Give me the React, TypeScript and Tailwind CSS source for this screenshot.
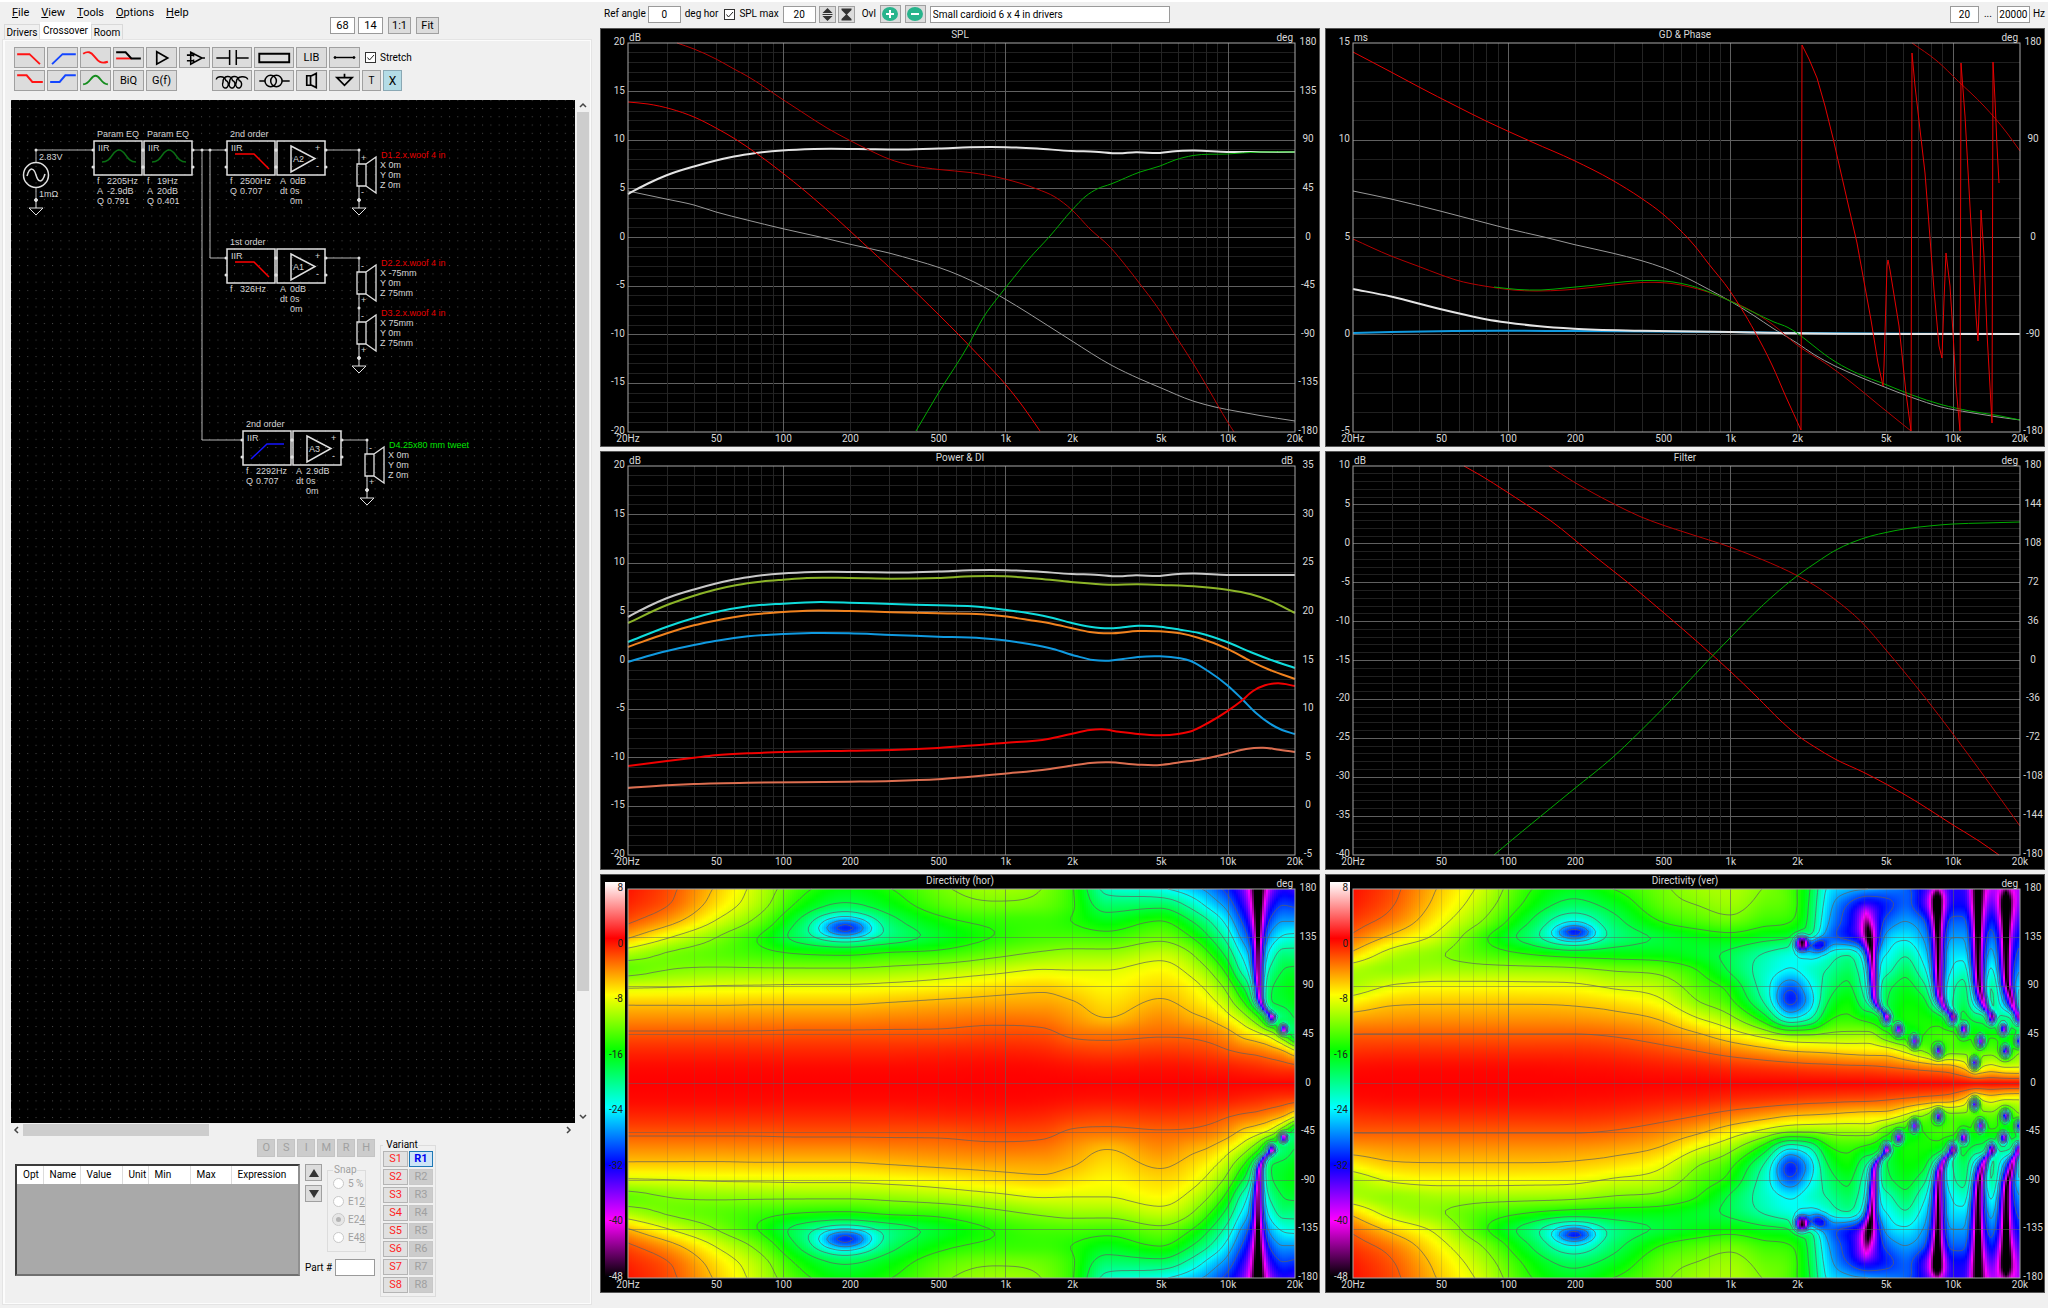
// App.tsx
import { Fragment, useState } from 'react';
import type { ReactNode } from 'react';

type Point = [number, number];

/* ------------------------------------------------------------------ */
/* Chart geometry                                                      */
/* ------------------------------------------------------------------ */

const PLOT_W = 667;
const PLOT_H = 389;
const PLOT_X = 28;
const PLOT_Y = 15;

const FREQ_LABELS: [number, string][] = [
  [20, '20Hz'], [50, '50'], [100, '100'], [200, '200'], [500, '500'],
  [1000, '1k'], [2000, '2k'], [5000, '5k'], [10000, '10k'], [20000, '20k'],
];

const freqToX = (f: number) => (Math.log10(f / 20) / 3) * PLOT_W;

const GRID_FREQS: number[] = [];
for (const decade of [10, 100, 1000, 10000]) {
  for (let n = 1; n < 10; n++) {
    const f = n * decade;
    if (f > 20 && f < 20000) GRID_FREQS.push(f);
  }
}

const range = (from: number, to: number, step: number) => {
  const out: number[] = [];
  const n = Math.round((to - from) / step);
  for (let i = 0; i <= n; i++) out.push(from + i * step);
  return out;
};

// Slope of the curve at point k, weighted by the distance to both neighbours
function tangentAt(xs: number[], ys: number[], k: number, keepExtremes: boolean) {
  const slope = (j: number) => (ys[j + 1] - ys[j]) / (xs[j + 1] - xs[j]);
  if (k === 0) return slope(0);
  if (k === xs.length - 1) return slope(k - 1);
  const a = slope(k - 1);
  const b = slope(k);
  if (keepExtremes && a * b <= 0) return 0;
  const ha = xs[k] - xs[k - 1];
  const hb = xs[k + 1] - xs[k];
  const m = (a * hb + b * ha) / (ha + hb);
  if (!keepExtremes) return m;
  const limit = 3 * Math.min(Math.abs(a), Math.abs(b));
  return Math.sign(m) * Math.min(Math.abs(m), limit);
}

// Smooth line through all points, x has to grow
function smooth(points: Point[]) {
  const xs = points.map((p) => p[0]);
  const ys = points.map((p) => p[1]);
  let d = `M${xs[0]} ${ys[0]}`;
  for (let i = 0; i < points.length - 1; i++) {
    const h = (xs[i + 1] - xs[i]) / 3;
    const y1 = ys[i] + h * tangentAt(xs, ys, i, false);
    const y2 = ys[i + 1] - h * tangentAt(xs, ys, i + 1, false);
    d += `C${(xs[i] + h).toFixed(1)} ${y1.toFixed(1)} ${(xs[i + 1] - h).toFixed(1)} ${y2.toFixed(1)} ${xs[i + 1]} ${ys[i + 1]}`;
  }
  return d;
}

const straight = (points: Point[]) => 'M' + points.map((p) => p.join(' ')).join('L');

/* ------------------------------------------------------------------ */
/* Curves (plot units)                                                 */
/* ------------------------------------------------------------------ */

interface Curve {
  color: string;
  width: number;
  points: Point[];
  sharp?: boolean;
}

const TOTAL: Point[] = [[0, 151], [20, 140.5], [38, 132.5], [66, 123.5], [88, 117.5], [106, 113.5], [128, 110], [154, 107.5], [186, 106], [230, 106], [275, 106.5], [311, 105.5], [342, 104.3], [378, 104.2], [409, 105.5], [444, 108], [467, 108.7], [491, 110.3], [508, 109.2], [532, 110], [547, 108.3], [565, 107.6], [599, 109], [632, 109], [667, 109]];

const SPL_CURVES: Curve[] = [
  { color: '#989898', width: 1, points: [[0, 148], [38, 156], [66, 162], [88, 169], [119, 177], [154, 185.5], [192, 194], [221, 201], [261, 210], [288, 217.5], [311, 224.5], [333, 233], [355, 243.5], [377, 256], [400, 270], [422, 284], [444, 298], [483, 322], [512, 336], [532, 344.5], [565, 358], [587, 364], [610, 368.5], [632, 372.5], [667, 378]] },
  { color: '#e4e4e4', width: 2, points: TOTAL },
  { color: '#b40000', width: 1, points: [[49, 0], [66, 6], [88, 16], [106, 26], [119, 33], [154, 56], [177, 71], [199, 85], [221, 97], [241, 107], [261, 116], [284, 122.5], [311, 126.5], [342, 129.5], [377, 136], [409, 146], [427, 154], [444, 167], [462, 186], [482, 204], [498, 223], [512, 241], [532, 268], [547, 292], [565, 320], [581, 347], [599, 378], [606, 389]] },
  { color: '#e60000', width: 1, points: [[0, 59], [20, 61], [43, 66], [66, 74], [88, 85], [108, 96.5], [128, 110], [154, 129.5], [177, 148], [199, 167], [221, 187], [248, 212], [275, 237], [311, 272], [331, 292], [355, 317], [378, 342], [396, 365], [412, 388]] },
  { color: '#00aa00', width: 1, points: [[288, 388], [311, 349], [341, 301], [355, 275], [371, 253], [387, 233], [400, 217], [422, 193], [444, 167], [458, 153], [469, 146], [483, 141], [512, 129], [532, 123], [547, 117], [565, 112.5], [599, 111], [632, 109], [667, 109]] },
];

const GD_CURVES: Curve[] = [
  { color: '#989898', width: 1, points: [[0, 148], [38, 156], [87, 168], [133, 180], [154, 185.5], [191, 194], [221, 201.5], [259, 210], [288, 217.5], [311, 225], [334, 235], [355, 246], [377, 258], [400, 272], [421, 286], [444, 300], [461, 311.5], [482, 323], [508, 334.5], [529, 343], [559, 354.5], [588, 364], [617, 369.5], [645, 374], [667, 377]] },
  { color: '#109ae0', width: 2, points: [[0, 290], [38, 289], [100, 288], [221, 288], [377, 289], [444, 290], [667, 291]] },
  { color: '#e4e4e4', width: 2, points: [[0, 246], [38, 253.5], [87, 266], [113, 272], [134, 276.5], [154, 279.5], [184, 283], [221, 285.7], [287, 287.7], [377, 289], [444, 290.3], [558, 291], [667, 291]] },
  { color: '#b40000', width: 1, points: [[0, 196], [38, 213], [66, 223.5], [87, 231.5], [103, 237], [133, 243.3], [160, 247], [183, 248], [212, 247], [240, 244.3], [264, 241.7], [296, 239.3], [320, 240.7], [334, 243.3], [355, 249], [377, 257.7], [393, 265], [419, 281], [444, 302], [475, 322], [499, 340], [527, 363], [558, 388]] },
  { color: '#b40000', width: 1, points: [[559, 0], [584, 18], [605, 38], [631, 63], [654, 90], [667, 108]] },
  { color: '#00aa00', width: 1, points: [[141, 244], [165, 246.5], [188, 247], [212, 245], [240, 242.3], [264, 239.5], [296, 237.5], [320, 239], [334, 241.7], [355, 248.5], [377, 258], [400, 269], [421, 279], [435, 284.5], [444, 290], [457, 300], [471, 311], [482, 318.5], [508, 332], [529, 340], [559, 352], [588, 361.5], [617, 368], [645, 372.5], [667, 377]] },
  { color: '#e60000', width: 1, points: [[0, 9], [38, 29], [66, 44], [103, 63], [133, 78], [179, 99], [221, 117.5], [259, 137], [288, 155], [311, 172], [327, 187], [341, 202], [355, 220], [377, 248], [388, 265], [402, 289], [419, 322], [433, 354], [448, 387]] },
  { color: '#e60000', width: 1, sharp: true, points: [[448, 387], [449, 2], [456, 16], [464, 35], [472, 63], [480, 95], [485, 117], [504, 200], [518, 277], [525, 320], [530, 343], [531, 323], [534, 223], [535, 217], [537, 227], [546, 283], [553, 350], [558, 388], [559, 10], [562, 43], [572, 130], [581, 247], [586, 303], [589, 315], [591, 257], [593, 210], [597, 243], [600, 290], [603, 343], [607, 388], [608, 20], [612, 73], [619, 200], [623, 273], [625, 298], [627, 237], [628, 167], [631, 213], [634, 290], [639, 380], [640, 19], [642, 57], [644, 103], [646, 140]] },
];

const POWER_CURVES: Curve[] = [
  { color: '#c8c8c8', width: 2, points: TOTAL },
  { color: '#8cb428', width: 2, points: [[0, 157], [39, 139], [66, 129.7], [87, 123.7], [109, 119], [132, 115.7], [155, 113.7], [179, 112], [221, 112], [264, 112.7], [310, 112], [344, 110.3], [377, 110.3], [411, 112.7], [443, 116], [481, 118.7], [510, 118.3], [533, 119], [571, 120.7], [599, 123.7], [623, 128.3], [642, 134.7], [667, 147]] },
  { color: '#10dcdc', width: 2, points: [[0, 176], [39, 160.7], [66, 152], [87, 146.3], [120, 140.3], [155, 137.7], [193, 136], [221, 136.7], [264, 138], [310, 139.3], [344, 140.3], [376, 143.7], [401, 147.3], [425, 152], [443, 156.7], [462, 160.7], [481, 162.3], [495, 161.3], [510, 159.7], [532, 160.7], [552, 163.7], [571, 167], [599, 176], [623, 186.3], [644, 194.3], [667, 202]] },
  { color: '#f0821e', width: 2, points: [[0, 181], [39, 167.3], [66, 159.3], [87, 154.7], [120, 149], [155, 146], [179, 144.7], [221, 145], [264, 146.3], [310, 147.3], [354, 148.3], [376, 150.3], [401, 154], [425, 158], [443, 162], [462, 166], [481, 167.3], [510, 165], [532, 165.3], [552, 167.3], [571, 172], [599, 182.7], [623, 195.3], [642, 204], [667, 213]] },
  { color: '#109ae0', width: 2, points: [[0, 196], [19, 190.3], [39, 185], [66, 179], [87, 175], [120, 170.3], [155, 168], [184, 167], [221, 167.3], [264, 169], [310, 170.7], [354, 172.3], [376, 174.3], [401, 178], [425, 183], [448, 190], [465, 194], [481, 194.7], [495, 193], [510, 191], [532, 190.3], [552, 192.3], [562, 194.7], [580, 205], [599, 219], [613, 232], [628, 247], [642, 257.7], [654, 264], [667, 268]] },
  { color: '#f00000', width: 2, points: [[0, 300], [39, 295], [66, 291.7], [87, 289.3], [120, 287.3], [155, 286], [221, 284.7], [264, 284], [310, 282], [354, 278.7], [376, 277], [420, 273], [443, 268], [462, 264], [474, 263.3], [491, 265.7], [510, 268], [532, 269.3], [550, 268], [564, 265], [580, 257], [599, 245.3], [613, 235.3], [625, 225], [637, 219.3], [650, 217.3], [667, 220]] },
  { color: '#dc6e50', width: 2, points: [[0, 322], [39, 319.3], [66, 318], [120, 316.7], [221, 315.7], [264, 315], [310, 313.3], [340, 311], [376, 307.7], [420, 303.3], [443, 299.7], [462, 297], [481, 296.3], [510, 298.7], [532, 299], [552, 296.3], [571, 293.7], [599, 287.7], [618, 283], [635, 281.7], [651, 283.7], [667, 286]] },
];

const FILTER_CURVES: Curve[] = [
  { color: '#b40000', width: 1, points: [[196, 0], [221, 16], [261, 38], [287, 50.5], [311, 59.5], [334, 67], [377, 81], [409, 93.5], [444, 109.5], [461, 119], [482, 133.5], [508, 155.5], [533, 184], [551, 205.5], [574, 234], [600, 268], [631, 310], [667, 360]] },
  { color: '#e60000', width: 1, points: [[111, 0], [127, 9], [154, 26], [174, 39], [198, 55], [240, 89], [273, 115], [311, 147], [348, 179], [377, 205], [405, 232], [428, 255], [444, 269], [461, 280.5], [482, 293], [511, 306.5], [533, 318], [565, 336.5], [600, 359], [626, 375], [646, 389]] },
  { color: '#00aa00', width: 1, points: [[141, 389], [154, 378], [188, 350], [221, 323], [259, 292], [287, 265.5], [320, 232], [355, 194.5], [377, 172], [400, 148.5], [421, 129], [444, 110], [464, 96], [482, 84.5], [499, 76.5], [518, 70], [533, 66.5], [551, 63], [579, 59.7], [600, 58], [631, 57], [667, 56]] },
];

/* ------------------------------------------------------------------ */
/* Directivity data: level in dB for 0..180 deg in 15 deg steps        */
/* ------------------------------------------------------------------ */

interface Directivity {
  columns: { x: number; db: number[] }[];
  // dips that follow a line: [x, deg, half width, depth]
  lines: [number, number, number, number][][];
  // dips at a spot: [x, deg, half width, half height in deg, depth]
  spots: [number, number, number, number, number][];
}

const HORIZONTAL: Directivity = {
  columns: [
    { x: 0, db: [0, -0.3, -1.2, -2.6, -4.4, -6.4, -9.4, -12.9, -10.6, -5.8, -2.6, -1.2, -0.6] },
    { x: 39, db: [0, -0.3, -1.2, -2.6, -4.4, -6.4, -9.2, -12, -12.2, -8.8, -5, -2.9, -2.3] },
    { x: 88, db: [0, -0.3, -1.2, -2.6, -4.4, -6.4, -8.9, -11.6, -13.2, -12, -9.2, -7.2, -6.3] },
    { x: 132, db: [0, -0.3, -1.2, -2.6, -4.3, -6.3, -8.8, -11.6, -14.2, -15.2, -13, -11, -10.2] },
    { x: 170, db: [0, -0.3, -1.2, -2.5, -4.3, -6.3, -8.7, -11.6, -15, -18.8, -18, -15.5, -14] },
    { x: 217, db: [0, -0.3, -1.2, -2.5, -4.3, -6.3, -8.7, -11.6, -15.4, -21, -23.5, -18.5, -16.3] },
    { x: 261, db: [0, -0.3, -1.2, -2.5, -4.1, -6, -8.4, -11.3, -14.6, -19.5, -19, -16.5, -15.1] },
    { x: 311, db: [0, -0.3, -1.1, -2.5, -3.9, -5.6, -7.9, -10.6, -14.2, -17, -15.8, -13.6, -12.5] },
    { x: 366, db: [0, -0.2, -1, -2.2, -3.6, -5.3, -7.1, -9.7, -12.7, -14.9, -14.5, -12.4, -11] },
    { x: 415, db: [0, -0.3, -1.2, -2.4, -3.8, -5.2, -6.6, -8.9, -11.6, -13.8, -14.3, -12.9, -12.1] },
    { x: 443, db: [0, -0.5, -1.7, -3.3, -4.7, -5.8, -7.2, -9, -11.2, -13.7, -15, -14.6, -14.6] },
    { x: 479, db: [0, -0.6, -2, -3.6, -5.9, -7, -7.9, -9, -11.2, -14, -16.5, -19.2, -22] },
    { x: 532, db: [0, -0.5, -1.7, -3.2, -4.4, -5.7, -6.9, -8, -9.9, -12.6, -14.9, -18.8, -23.5] },
    { x: 564, db: [0, -0.6, -1.9, -3.4, -5.4, -6.9, -8.1, -9.9, -12, -15, -18, -22, -26] },
    { x: 582, db: [0, -0.8, -2.2, -3.9, -6.2, -8.2, -10, -12.2, -15, -18, -21, -25, -28] },
    { x: 599, db: [0, -0.9, -2.8, -4.9, -7.9, -10.6, -13, -16, -19, -22, -25, -28, -31] },
    { x: 616, db: [0, -1.2, -3.4, -6.8, -10.6, -15, -18.5, -22.5, -25, -28, -30.5, -33, -35] },
    { x: 629, db: [0, -1.4, -3.8, -8, -14, -19, -22, -25, -27, -30, -33, -35, -37] },
    { x: 642, db: [0, -1.7, -4.6, -10, -19, -18, -18.5, -20.5, -23, -26, -29, -32, -35] },
    { x: 655, db: [0, -2, -5.8, -14, -19, -17.5, -17, -18, -20, -23.5, -27, -30, -33] },
    { x: 667, db: [0, -2.2, -8.5, -20, -18, -16.5, -16.3, -17.5, -20, -23, -27, -30.5, -34] },
  ],
  lines: [
    [[643, 62, 4, 10], [638, 66, 4, 17], [632, 75, 4, 20], [630, 90, 4, 21], [629, 120, 4, 21], [629, 180, 7, 18]],
  ],
  spots: [[217, 143, 26, 9, 8], [643, 60, 4, 4, 16], [655, 50, 4, 4, 26]],
};

const VERTICAL: Directivity = {
  columns: [
    { x: 0, db: [0, -0.4, -1.5, -2.9, -5, -7.6, -10.5, -10.5, -6.6, -3.6, -1.9, -0.9, -0.5] },
    { x: 38, db: [0, -0.3, -1.4, -2.9, -4.7, -6.4, -8.8, -11.3, -10, -6.6, -4, -2.8, -2.3] },
    { x: 87, db: [0, -0.3, -1.4, -2.9, -4.6, -6.2, -8.2, -10.8, -11.8, -9.9, -8.2, -7, -6.3] },
    { x: 133, db: [0, -0.3, -1.4, -2.9, -4.6, -6.2, -8.2, -11, -13.7, -14.8, -12.5, -11, -10] },
    { x: 173, db: [0, -0.3, -1.4, -2.9, -4.6, -6.2, -8.3, -11.1, -15, -19, -17.5, -15.5, -14.5] },
    { x: 221, db: [0, -0.4, -1.4, -2.9, -4.7, -6.4, -8.5, -11.4, -16.3, -24, -23, -19, -16.8] },
    { x: 260, db: [0, -0.5, -1.6, -3.2, -5.1, -7, -9.4, -12.2, -16.3, -20, -19, -17, -15] },
    { x: 311, db: [0, -0.8, -2.3, -4.3, -6.4, -8.7, -10.6, -13, -16.5, -17.5, -14.8, -13, -12.3] },
    { x: 344, db: [0, -1, -3, -5.6, -8.8, -11.7, -13.4, -15, -17.2, -16.5, -13.6, -12, -11] },
    { x: 377, db: [0, -1.4, -4, -7.6, -11.2, -14.3, -16, -18.3, -18.5, -16, -12.8, -11.2, -10.6] },
    { x: 409, db: [0, -1.7, -5, -9.8, -16, -20.5, -22, -22, -21, -17, -14.2, -12.8, -12] },
    { x: 438, db: [0, -2, -6, -12, -23, -28, -27, -24, -23, -18, -15, -14, -14] },
    { x: 457, db: [0, -2.2, -6.3, -12, -21, -25, -24, -22.5, -24, -20, -19, -18.5, -18] },
    { x: 473, db: [0, -2.3, -6.5, -11.5, -16, -18.5, -20, -21, -23, -27, -26, -25, -24] },
    { x: 494, db: [0, -2.5, -6.9, -11.2, -14.5, -15.8, -17.5, -19, -21.5, -31, -31, -30, -26] },
    { x: 515, db: [0, -2.6, -7.2, -11, -16, -20, -22, -23, -25, -32, -33, -33, -27] },
    { x: 533, db: [0, -2.9, -7.5, -14, -17, -18, -19, -22, -24, -26, -29, -31, -28] },
    { x: 552, db: [0, -3.4, -9.5, -16, -15.5, -16, -17, -19, -21.5, -24.5, -27, -29, -29] },
    { x: 570, db: [0, -4, -12, -15, -15.5, -17, -20, -23, -25, -27, -29, -33, -33] },
    { x: 585, db: [0, -4.5, -14, -14, -16.5, -22, -25, -27, -29, -31, -33, -36, -36] },
    { x: 598, db: [0, -5, -13, -14, -19, -21, -22, -24, -25, -27, -29, -32, -33] },
    { x: 610, db: [0, -6.5, -13, -15.5, -17, -19, -20, -22.5, -25, -27, -29, -32, -33] },
    { x: 624, db: [0, -9, -13, -15.5, -19, -25, -27, -29, -31, -33, -35, -37, -38] },
    { x: 638, db: [0, -8, -13, -15.5, -19, -20, -21, -23.5, -26, -28.5, -31, -34, -37] },
    { x: 652, db: [0, -9, -15, -15.5, -20, -26, -28, -30, -32, -34, -36, -38, -38] },
    { x: 667, db: [0, -9, -12, -17, -21, -21, -24, -27, -29, -31, -33, -35, -37] },
  ],
  lines: [
    [[533, 62, 4, 8], [527, 68, 4, 17], [522, 75, 4, 19], [520, 90, 4, 20], [519, 105, 4, 21], [517, 125, 5, 22], [514, 142, 7, 16], [512, 158, 8, 6], [511, 170, 6, 0], [511, 180, 6, 0]],
    [[599, 62, 4, 10], [593, 67, 4, 17], [588, 75, 4, 20], [585, 90, 4, 21], [584, 130, 4, 21], [583, 170, 6, 19], [583, 180, 6, 6]],
    [[638, 62, 4, 10], [633, 68, 4, 17], [628, 80, 4, 20], [625, 95, 4, 21], [624, 130, 4, 21], [624, 180, 6, 16]],
    [[665, 62, 4, 10], [661, 68, 4, 17], [657, 80, 4, 20], [653, 95, 4, 21], [652, 130, 4, 21], [652, 170, 6, 17], [652, 180, 6, 6]],
  ],
  spots: [
    [221, 140, 18, 7, 7],
    [436, 80, 14, 16, 3],
    [448, 130, 6, 6, 28], [464, 128, 10, 7, 9],
    [533, 60, 4, 5, 20], [545, 50, 4, 5, 24], [561, 39, 4, 5, 24], [585, 30, 4, 5, 24], [621, 19, 4, 5, 26],
    [599, 60, 4, 5, 18], [610, 50, 4, 5, 24], [627, 39, 4, 5, 24], [652, 30, 4, 5, 22],
    [638, 60, 4, 5, 18], [650, 50, 4, 5, 22], [666, 39, 4, 5, 22],
    [665, 60, 4, 5, 16],
  ],
};

const HALF_H = PLOT_H / 2;
const COL_STEP = 2;
const ROW_COUNT = 56;

function interpolate(xs: number[], ys: number[], x: number, keepExtremes = true) {
  let i = 0;
  while (i < xs.length - 2 && x > xs[i + 1]) i++;
  const h = xs[i + 1] - xs[i];
  const t = Math.min(1, Math.max(0, (x - xs[i]) / h));
  const t2 = t * t;
  const t3 = t2 * t;
  return (
    (2 * t3 - 3 * t2 + 1) * ys[i] +
    (t3 - 2 * t2 + t) * h * tangentAt(xs, ys, i, keepExtremes) +
    (3 * t2 - 2 * t3) * ys[i + 1] +
    (t3 - t2) * h * tangentAt(xs, ys, i + 1, keepExtremes)
  );
}

// Grid of levels, [column][row], row 0 is 180 deg and the last row is 0 deg
function buildField(data: Directivity) {
  const angles = range(0, 180, 15);
  const xs = data.columns.map((c) => c.x);
  const cols = Math.floor(PLOT_W / COL_STEP) + 1;
  const field: number[][] = Array.from({ length: cols }, () => []);
  for (let r = 0; r < ROW_COUNT; r++) {
    const deg = 180 * (1 - r / (ROW_COUNT - 1));
    const ys = data.columns.map((c) => interpolate(angles, c.db, deg, false));
    for (let c = 0; c < cols; c++) {
      const x = c * COL_STEP;
      let v = interpolate(xs, ys, x);
      for (const line of data.lines) {
        const degs = line.map((p) => p[1]);
        if (deg < degs[0]) continue;
        const at = (k: number) => interpolate(degs, line.map((p) => p[k]), deg);
        const dx = Math.abs(x - at(0));
        if (dx > 40) continue;
        v -= at(3) * Math.exp(-((dx / at(2)) ** 1.4));
      }
      for (const [sx, sd, w, h, depth] of data.spots) {
        v -= depth * Math.exp(-(((x - sx) / w) ** 2) - ((deg - sd) / h) ** 2);
      }
      field[c][r] = v;
    }
  }
  return field;
}

const COLOR_STOPS: [number, number[]][] = [
  [-48, [0, 0, 0]],
  [-40, [255, 0, 255]],
  [-32, [0, 0, 255]],
  [-24, [0, 255, 255]],
  [-16, [0, 255, 0]],
  [-8, [255, 255, 0]],
  [0, [255, 0, 0]],
  [8, [255, 255, 255]],
];

function levelColor(db: number) {
  const v = Math.min(8, Math.max(-48, db));
  let i = 0;
  while (i < COLOR_STOPS.length - 2 && v > COLOR_STOPS[i + 1][0]) i++;
  const [a, ca] = COLOR_STOPS[i];
  const [b, cb] = COLOR_STOPS[i + 1];
  const t = (v - a) / (b - a);
  return `rgb(${ca.map((c, k) => Math.round(c + (cb[k] - c) * t)).join(',')})`;
}

// Marching squares over the upper half, repeated upside down for the lower half
function contourPath(field: number[][], level: number) {
  let d = '';
  const rowH = HALF_H / (ROW_COUNT - 1);
  for (let c = 0; c < field.length - 1; c++) {
    for (let r = 0; r < ROW_COUNT - 1; r++) {
      const corners: [number, number, number][] = [
        [c, r, field[c][r]],
        [c + 1, r, field[c + 1][r]],
        [c + 1, r + 1, field[c + 1][r + 1]],
        [c, r + 1, field[c][r + 1]],
      ];
      const hits: Point[] = [];
      for (let k = 0; k < 4; k++) {
        const a = corners[k];
        const b = corners[(k + 1) % 4];
        if (a[2] < level !== b[2] < level) {
          const t = (level - a[2]) / (b[2] - a[2]);
          hits.push([(a[0] + (b[0] - a[0]) * t) * COL_STEP, (a[1] + (b[1] - a[1]) * t) * rowH]);
        }
      }
      for (let k = 0; k + 1 < hits.length; k += 2) {
        const [p, q] = [hits[k], hits[k + 1]];
        d += `M${p[0].toFixed(1)} ${p[1].toFixed(1)}L${q[0].toFixed(1)} ${q[1].toFixed(1)}`;
        d += `M${p[0].toFixed(1)} ${(PLOT_H - p[1]).toFixed(1)}L${q[0].toFixed(1)} ${(PLOT_H - q[1]).toFixed(1)}`;
      }
    }
  }
  return d;
}

const FIELDS = { hor: buildField(HORIZONTAL), ver: buildField(VERTICAL) };
const CONTOUR_LEVELS = range(-30, -3, 3);
const CONTOURS = {
  hor: CONTOUR_LEVELS.map((l) => contourPath(FIELDS.hor, l)).join(''),
  ver: CONTOUR_LEVELS.map((l) => contourPath(FIELDS.ver, l)).join(''),
};

/* ------------------------------------------------------------------ */
/* Charts                                                              */
/* ------------------------------------------------------------------ */

const LABEL = 'fill-[#d8d8d8] text-[10px]';

interface FrameProps {
  title: string;
  leftUnit?: string;
  rightUnit: string;
  leftLabels: number[];
  rightLabels: number[];
  children: ReactNode;
}

function ChartFrame({ title, leftUnit, rightUnit, leftLabels, rightLabels, children }: FrameProps) {
  const labelY = (i: number, n: number) => PLOT_Y + (PLOT_H * i) / (n - 1) + 2;
  return (
    <svg viewBox="0 0 720 419" role="img" aria-label={title} className="block h-auto w-full bg-black">
      <rect x="0.5" y="0.5" width="719" height="418" fill="none" stroke="#555" />
      <g transform={`translate(${PLOT_X} ${PLOT_Y})`}>{children}</g>
      <rect x={PLOT_X} y={PLOT_Y} width={PLOT_W} height={PLOT_H} fill="none" stroke="#a8a8a8" />
      <text x="360" y="10" textAnchor="middle" className={LABEL}>{title}</text>
      {leftUnit && <text x="29" y="13" className={LABEL}>{leftUnit}</text>}
      <text x="693" y="13" textAnchor="end" className={LABEL}>{rightUnit}</text>
      {leftLabels.map((v, i) => (
        <text key={v} x="25" y={labelY(i, leftLabels.length)} textAnchor="end" className={LABEL}>{v}</text>
      ))}
      {rightLabels.map((v, i) => (
        <text key={v} x="708" y={labelY(i, rightLabels.length)} textAnchor="middle" className={LABEL}>{v}</text>
      ))}
      {FREQ_LABELS.map(([f, label]) => (
        <text key={f} x={PLOT_X + freqToX(f)} y="414" textAnchor="middle" className={LABEL}>{label}</text>
      ))}
    </svg>
  );
}

interface LineChartProps extends Omit<FrameProps, 'children'> {
  divisions: number;
  curves: Curve[];
}

function LineChart({ divisions, curves, ...frame }: LineChartProps) {
  return (
    <ChartFrame {...frame}>
      <g shapeRendering="crispEdges">
        {range(1, divisions - 1, 1).map((i) => (
          <line key={i} x1="0" x2={PLOT_W} y1={(PLOT_H * i) / divisions} y2={(PLOT_H * i) / divisions} stroke={i % 5 ? '#202020' : '#606060'} />
        ))}
        {GRID_FREQS.map((f) => (
          <line key={f} x1={freqToX(f)} x2={freqToX(f)} y1="0" y2={PLOT_H} stroke={[100, 1000, 10000].includes(f) ? '#606060' : '#242424'} />
        ))}
      </g>
      {curves.map((c, i) => (
        <path key={i} d={c.sharp ? straight(c.points) : smooth(c.points)} fill="none" stroke={c.color} strokeWidth={c.width} strokeLinejoin="round" />
      ))}
    </ChartFrame>
  );
}

function DirectivityChart({ title, plane }: { title: string; plane: 'hor' | 'ver' }) {
  const field = FIELDS[plane];
  return (
    <ChartFrame title={title} rightUnit="deg" leftLabels={[]} rightLabels={[180, 135, 90, 45, 0, -45, -90, -135, -180]}>
      <defs>
        {field.map((column, c) => (
          <linearGradient key={c} id={`${plane}-${c}`} gradientUnits="userSpaceOnUse" x1="0" y1="0" x2="0" y2={HALF_H} spreadMethod="reflect">
            {column.map((v, r) => (
              <stop key={r} offset={r / (ROW_COUNT - 1)} stopColor={levelColor(v)} />
            ))}
          </linearGradient>
        ))}
        <linearGradient id={`${plane}-scale`} x1="0" y1="1" x2="0" y2="0">
          {COLOR_STOPS.map(([v]) => (
            <stop key={v} offset={(v + 48) / 56} stopColor={levelColor(v)} />
          ))}
        </linearGradient>
      </defs>
      {field.map((_, c) => (
        <rect key={c} x={c * COL_STEP} y="0" width={Math.min(COL_STEP, PLOT_W - c * COL_STEP)} height={PLOT_H} fill={`url(#${plane}-${c})`} shapeRendering="crispEdges" />
      ))}
      <g shapeRendering="crispEdges" stroke="#606060">
        {range(1, 7, 1).map((i) => (
          <line key={i} x1="0" x2={PLOT_W} y1={(PLOT_H * i) / 8} y2={(PLOT_H * i) / 8} strokeOpacity="0.5" />
        ))}
        {GRID_FREQS.map((f) => (
          <line key={f} x1={freqToX(f)} x2={freqToX(f)} y1="0" y2={PLOT_H} strokeOpacity={[100, 1000, 10000].includes(f) ? 0.6 : 0.2} />
        ))}
      </g>
      <path d={CONTOURS[plane]} fill="none" stroke="#606060" strokeOpacity="0.7" />
      <rect x="-23" y="-7" width="20" height={PLOT_H + 6} fill={`url(#${plane}-scale)`} />
      {range(8, -48, -8).map((v, i) => (
        <text key={v} x="-5" y={(PLOT_H * i) / 7 + 2} textAnchor="end" className={v === -48 ? LABEL : 'fill-[#202020] text-[10px]'}>{v}</text>
      ))}
    </ChartFrame>
  );
}

/* ------------------------------------------------------------------ */
/* Schematic                                                           */
/* ------------------------------------------------------------------ */

const WHITE = '#e0e0e0';

function SchematicText({ x, y, color = '#d4d4d4', children }: { x: number; y: number; color?: string; children: ReactNode }) {
  return (
    <text x={x} y={y} fill={color} className="font-['Liberation_Sans',Arial,sans-serif] text-[9px]">{children}</text>
  );
}

function Dot({ x, y }: Record<'x' | 'y', number>) {
  return <circle cx={x} cy={y} r="1.5" fill={WHITE} />;
}

function Ground({ x, y }: Record<'x' | 'y', number>) {
  return (
    <g stroke={WHITE} fill="none">
      <Dot x={x} y={y} />
      <path d={`M${x} ${y}v8M${x - 7} ${y + 8}h14l-7 7z`} />
    </g>
  );
}

interface BlockProps {
  x: number;
  y: number;
  title?: string;
  params: [string, string][];
  children: ReactNode;
}

function Block({ x, y, title, params, children }: BlockProps) {
  return (
    <g transform={`translate(${x} ${y})`}>
      {title && <SchematicText x={3} y={-4}>{title}</SchematicText>}
      <rect width="48" height="34" fill="none" stroke={WHITE} strokeWidth="1.5" />
      <Dot x={-1} y={9} />
      <Dot x={-1} y={26} />
      <Dot x={49} y={9} />
      <Dot x={49} y={26} />
      {children}
      {params.map(([name, value], i) => (
        <Fragment key={i}>
          <SchematicText x={3} y={43 + i * 10}>{name}</SchematicText>
          <SchematicText x={13} y={43 + i * 10}>{value}</SchematicText>
        </Fragment>
      ))}
    </g>
  );
}

const FILTER_SHAPES = {
  peak: { d: 'M8 21C18 21 18 9 25 9S32 21 42 21', color: '#0a6e14' },
  lowpass: { d: 'M8 13H27L42 28', color: '#ff0000' },
  highpass: { d: 'M8 28L24 13H41', color: '#1414ff' },
};

function FilterBlock({ shape, ...props }: Omit<BlockProps, 'children'> & { shape: keyof typeof FILTER_SHAPES }) {
  return (
    <Block {...props}>
      <SchematicText x={4} y={10}>IIR</SchematicText>
      <path d={FILTER_SHAPES[shape].d} fill="none" stroke={FILTER_SHAPES[shape].color} strokeWidth="1.5" />
    </Block>
  );
}

function AmpBlock({ name, gain, x, y }: { name: string; gain: string; x: number; y: number }) {
  return (
    <Block x={x} y={y} params={[['A', gain], ['dt', '0s'], ['', '0m']]}>
      <path d="M14 5L38 17.500L14 31Z" fill="none" stroke={WHITE} strokeWidth="1.5" />
      <SchematicText x={16} y={21}>{name}</SchematicText>
      <SchematicText x={38} y={10}>+</SchematicText>
      <SchematicText x={39} y={28}>-</SchematicText>
    </Block>
  );
}

interface SpeakerProps {
  x: number;
  y: number;
  name: string;
  color: string;
  position: string[];
  inverted?: boolean;
}

function Speaker({ x, y, name, color, position, inverted }: SpeakerProps) {
  return (
    <g transform={`translate(${x} ${y})`}>
      <Dot x={0} y={0} />
      <path d="M0 0V14M0 36V50" stroke={WHITE} />
      <path d="M-2 14H7V36H-2ZM7 14L17 7V43L7 36" fill="none" stroke={WHITE} strokeWidth="1.300" />
      <SchematicText x={2} y={11}>{inverted ? '-' : '+'}</SchematicText>
      <SchematicText x={2} y={45}>{inverted ? '+' : '-'}</SchematicText>
      <SchematicText x={22} y={8} color={color}>{name}</SchematicText>
      {position.map((line, i) => (
        <SchematicText key={line} x={21} y={18 + i * 10}>{line}</SchematicText>
      ))}
    </g>
  );
}

function Schematic() {
  return (
    <svg role="img" aria-label="Crossover schematic" className="block h-full w-full bg-black">
      <defs>
        <pattern id="dots" x="8" y="8" width="8.270" height="8.270" patternUnits="userSpaceOnUse">
          <rect width="1" height="1" fill="#4a4a4a" />
        </pattern>
      </defs>
      <rect width="100%" height="100%" fill="url(#dots)" />
      <g fill="none" stroke="#b4b4b4">
        <path d="M25 50V62M25 88V100M25 50H82M181 50H214M191 50V340H231M199 50V158H214M315 50H348M315 158H348M331 340H356" />
      </g>
      <circle cx="25" cy="75" r="12.500" fill="none" stroke={WHITE} strokeWidth="1.500" />
      <path d="M16 76C19 66 23 68 25 75S31 84 34 74" fill="none" stroke={WHITE} strokeWidth="1.500" />
      <Dot x={25} y={50} />
      <Ground x={25} y={100} />
      <SchematicText x={28} y={60}>2.83V</SchematicText>
      <SchematicText x={28} y={97}>1mΩ</SchematicText>
      <FilterBlock x={83} y={41} title="Param EQ" shape="peak" params={[['f', '2205Hz'], ['A', '-2.9dB'], ['Q', '0.791']]} />
      <FilterBlock x={133} y={41} title="Param EQ" shape="peak" params={[['f', '19Hz'], ['A', '20dB'], ['Q', '0.401']]} />
      <Dot x={191} y={50} />
      <Dot x={199} y={50} />
      <FilterBlock x={216} y={41} title="2nd order" shape="lowpass" params={[['f', '2500Hz'], ['Q', '0.707']]} />
      <AmpBlock x={266} y={41} name="A2" gain="0dB" />
      <Speaker x={348} y={50} name="D1.2.x.woof 4 in" color="#e60000" position={['X 0m', 'Y 0m', 'Z 0m']} />
      <Ground x={348} y={100} />
      <FilterBlock x={216} y={149} title="1st order" shape="lowpass" params={[['f', '326Hz']]} />
      <AmpBlock x={266} y={149} name="A1" gain="0dB" />
      <Speaker x={348} y={158} name="D2.2.x.woof 4 in" color="#e60000" position={['X -75mm', 'Y 0m', 'Z 75mm']} inverted />
      <Speaker x={348} y={208} name="D3.2.x.woof 4 in" color="#e60000" position={['X 75mm', 'Y 0m', 'Z 75mm']} inverted />
      <Ground x={348} y={258} />
      <FilterBlock x={232} y={331} title="2nd order" shape="highpass" params={[['f', '2292Hz'], ['Q', '0.707']]} />
      <AmpBlock x={282} y={331} name="A3" gain="2.9dB" />
      <Speaker x={356} y={340} name="D4.25x80 mm tweet" color="#00e600" position={['X 0m', 'Y 0m', 'Z 0m']} inverted />
      <Ground x={356} y={390} />
    </svg>
  );
}

/* ------------------------------------------------------------------ */
/* Left side                                                           */
/* ------------------------------------------------------------------ */

const BUTTON = 'flex items-center justify-center border border-[#a0a0a0] bg-[#dcdcdc]';

interface Tool {
  name: string;
  wide?: boolean;
  icon: ReactNode;
}

const TOOLS_TOP: Tool[] = [
  { name: 'Low pass', icon: <path d="M2 6.500H15L26 17" stroke="#ff1414" /> },
  { name: 'High pass', icon: <path d="M4 17L15 6.500H29" stroke="#1446ff" /> },
  { name: 'All pass', icon: <path d="M2 6C7 3 10 4 14 9S20 17 28 14.500" stroke="#ff1414" /> },
  { name: 'Shelf pair', icon: <><path d="M2 11H18" stroke="#ff1414" /><path d="M2 4.500H12L18 11H28" /></> },
  { name: 'Amplifier', icon: <path d="M10 4L21.500 10.500L10 17Z" strokeWidth="1.800" /> },
  { name: 'Op amp', icon: <path d="M11 4.500L23 10.500L11 17ZM7 7.500H14M7 13.500H14M23 10.500H26M14 5V9M14 12V15.500" strokeWidth="1.600" /> },
  { name: 'Capacitor', wide: true, icon: <path d="M3 10.500H17M24 10.500H37M17 2V18M24 2V18" strokeWidth="1.600" /> },
  { name: 'Resistor', wide: true, icon: <path d="M4 6H35.500V15H4Z" /> },
  { name: 'Library', icon: 'LIB' },
  { name: 'Wire', icon: <><path d="M5 10H25" strokeWidth="1.500" /><circle cx="5" cy="10" r="1" fill="black" strokeWidth="1" /><circle cx="25" cy="10" r="1" fill="black" strokeWidth="1" /></> },
];

const TOOLS_BOTTOM: (Tool | null)[] = [
  { name: 'Low shelf', icon: <path d="M2 4.500H12L18 11.500H29" stroke="#ff1414" /> },
  { name: 'High shelf', icon: <path d="M2 11.500H12L18 4.500H29" stroke="#1446ff" /> },
  { name: 'Peak', icon: <path d="M2 14C9 14 10 5 15 5S21 14 28 14" stroke="#148c1e" /> },
  { name: 'Biquad', icon: 'BiQ' },
  { name: 'Transfer function', icon: 'G(f)' },
  null,
  { name: 'Inductor', wide: true, icon: <path d="M3 9C3 5 12 5 13 10A3 4 0 1 1 10 12C10 4 19 4 20 10A3 4 0 1 1 17 12C17 4 26 4 27 10A3 4 0 1 1 24 12C24 4 36 5 36 9" strokeWidth="1.500" /> },
  { name: 'Transformer', wide: true, icon: <g strokeWidth="1.600"><circle cx="16" cy="10.500" r="6" /><circle cx="22" cy="10.500" r="6" /><path d="M4 10.500H10M28 10.500H36" /></g> },
  { name: 'Driver', icon: <path d="M10 5H14V15H10ZM14 5.500L20 2.500V17.500L14 14.500" strokeWidth="1.800" /> },
  { name: 'Ground', icon: <path d="M15 3V7M7 7H23L15 15Z" strokeWidth="1.800" /> },
];

function ToolButton({ tool }: { tool: Tool | null }) {
  if (!tool) return <span className="w-[31px]" />;
  return (
    <button type="button" title={tool.name} aria-label={tool.name} className={`${BUTTON} h-[21px] text-[11px] ${tool.wide ? 'w-10' : 'w-[31px]'}`}>
      {typeof tool.icon === 'string' ? tool.icon : (
        <svg viewBox={tool.wide ? '0 0 39 20' : '0 0 30 20'} className="h-full w-full" fill="none" stroke="black" strokeWidth="2">
          {tool.icon}
        </svg>
      )}
    </button>
  );
}

function CheckBox({ label }: { label: string }) {
  const [checked, setChecked] = useState(true);
  return (
    <label className="relative flex items-center gap-1 whitespace-nowrap">
      <input type="checkbox" checked={checked} onChange={() => setChecked(!checked)} className="h-[11px] w-[11px] appearance-none border border-[#333] bg-white" />
      {checked && (
        <svg viewBox="0 0 11 11" className="pointer-events-none absolute left-0 h-[11px] w-[11px]" fill="none" stroke="#222">
          <path d="M2.500 5.500L4.500 8L9 3" />
        </svg>
      )}
      {label}
    </label>
  );
}

const FIELD = 'border border-[#9a9a9a] bg-white text-center outline-none';

function MenuBar() {
  return (
    <nav className="flex h-5 items-center gap-3 pl-3 text-[11px]">
      {['File', 'View', 'Tools', 'Options', 'Help'].map((item) => (
        <button key={item} type="button">
          <u>{item[0]}</u>{item.slice(1)}
        </button>
      ))}
    </nav>
  );
}

function TabBar() {
  return (
    <div className="flex h-[18px] items-end pl-1">
      <div role="tablist" className="flex items-end">
        <button type="button" role="tab" className="h-4 w-9 border border-b-0 border-[#d9d9d9]">Drivers</button>
        <button type="button" role="tab" aria-selected="true" className="h-[18px] w-[51px] bg-white">Crossover</button>
        <button type="button" role="tab" className="h-4 w-[32px] border border-b-0 border-[#d9d9d9]">Room</button>
      </div>
      <div className="relative -top-1.5 ml-auto mr-[152px] flex items-center gap-[3px] text-[11px]">
        <input aria-label="Grid width" defaultValue="68" className={`${FIELD} h-[17px] w-[25px] bg-[#f4f4f4]`} />
        <input aria-label="Grid height" defaultValue="14" className={`${FIELD} h-[17px] w-[25px] bg-[#f4f4f4]`} />
        <button type="button" className={`${BUTTON} ml-[2px] h-[17px] w-[23px]`}>1:1</button>
        <button type="button" className={`${BUTTON} ml-[2px] h-[17px] w-[23px]`}>Fit</button>
      </div>
    </div>
  );
}

function Toolbar() {
  return (
    <div className="flex flex-col gap-[2px] pb-[9px] pl-[9px] pt-[6px]">
      <div className="flex items-center gap-[2px]">
        {TOOLS_TOP.map((tool) => <ToolButton key={tool.name} tool={tool} />)}
        <div className="ml-[3px]"><CheckBox label="Stretch" /></div>
      </div>
      <div className="flex items-center gap-[2px]">
        {TOOLS_BOTTOM.map((tool, i) => <ToolButton key={i} tool={tool} />)}
        <button type="button" className={`${BUTTON} h-[21px] w-[19px]`}>T</button>
        <button type="button" className="flex h-[21px] w-[19px] items-center justify-center border border-[#8aa8b4] bg-[#b4dce6] text-[12px]">X</button>
      </div>
    </div>
  );
}

function Chevron({ d }: { d: string }) {
  return (
    <svg viewBox="0 0 12 12" className="h-3 w-3" fill="none" stroke="#444" strokeWidth="1.500">
      <path d={d} />
    </svg>
  );
}

function ParameterTable() {
  return (
    <div className="h-28 w-[285px] border-2 border-[#3c3c3c] border-b-[#707070] border-r-[#909090] bg-[#a9a9a9]">
      <table className="w-full table-fixed border-collapse bg-white text-left">
        <thead>
          <tr className="h-[18px]">
            {([['Opt', 'w-[26px]'], ['Name', 'w-[37px]'], ['Value', 'w-[42px]'], ['Unit', 'w-[26px]'], ['Min', 'w-[42px]'], ['Max', 'w-[41px]'], ['Expression', '']] as const).map(([name, width]) => (
              <th key={name} className={`${width} border-r border-[#dcdcdc] pl-1.5 font-normal last:border-r-0`}>{name}</th>
            ))}
          </tr>
        </thead>
      </table>
    </div>
  );
}

function SnapBox() {
  return (
    <fieldset disabled className="flex h-[88px] w-[38px] flex-col gap-[5px] border border-[#dcdcdc] pl-[5px] pt-px text-[#a0a0a0]">
      <legend className="pl-px leading-3">Snap</legend>
      {([['5 ', '%'], ['E1', '2'], ['E2', '4'], ['E4', '8']] as const).map(([head, tail]) => (
        <label key={tail} className="flex h-[13px] items-center gap-1 whitespace-nowrap">
          <input type="radio" name="snap" defaultChecked={tail === '4'} className="h-[11px] w-[11px] shrink-0 appearance-none rounded-full border border-[#c8c8c8] bg-white checked:border-[3px] checked:border-[#e6e6e6] checked:bg-[#b4b4b4] checked:outline checked:outline-[#c8c8c8]" />
          <span>{head}{tail === '%' ? tail : <u>{tail}</u>}</span>
        </label>
      ))}
    </fieldset>
  );
}

function VariantBox() {
  return (
    <fieldset className="w-[56px] border border-[#dcdcdc] px-[2px] pb-[3px]">
      <legend className="pl-[3px] leading-3">Variant</legend>
      <div className="grid grid-cols-2 gap-x-px gap-y-[2px]">
        {range(1, 8, 1).map((n) => (
          <Fragment key={n}>
            <button type="button" className="h-4 border border-[#b4b4b4] bg-[#e1e1e1] text-[11px] leading-3 text-[#ff1e1e]">S{n}</button>
            {n === 1 ? (
              <button type="button" className="h-4 border border-[#1e78b4] bg-[#cce4f7] text-[11px] font-bold leading-3 text-[#0000f0]">R1</button>
            ) : (
              <button type="button" disabled className="h-4 border border-[#c8c8c8] bg-[#cccccc] text-[11px] leading-3 text-[#a0a0a0]">R{n}</button>
            )}
          </Fragment>
        ))}
      </div>
    </fieldset>
  );
}

function BottomPanel() {
  return (
    <div className="flex gap-[5px] pb-[6px] pl-[10px] pt-[2px]">
      <div>
        <div className="flex justify-end gap-[2px] pb-[7px]">
          {['O', 'S', 'I', 'M', 'R', 'H'].map((name) => (
            <button key={name} type="button" disabled className="h-[18px] w-[18px] border border-[#c4c4c4] bg-[#cccccc] text-[11px] leading-3 text-[#a0a0a0]">{name}</button>
          ))}
        </div>
        <div className="flex gap-[5px]">
          <ParameterTable />
          <div className="flex flex-col justify-between">
            <div className="flex gap-[5px]">
              <div className="flex flex-col gap-1">
                <button type="button" aria-label="Move up" className={`${BUTTON} h-[17px] w-[17px]`}>
                  <svg viewBox="0 0 12 12" className="h-3 w-3"><path d="M6 2L11 10H1Z" fill="#333" /></svg>
                </button>
                <button type="button" aria-label="Move down" className={`${BUTTON} h-[17px] w-[17px]`}>
                  <svg viewBox="0 0 12 12" className="h-3 w-3"><path d="M6 10L11 2H1Z" fill="#333" /></svg>
                </button>
              </div>
              <SnapBox />
            </div>
            <label className="flex items-center gap-[3px] whitespace-nowrap">
              Part #
              <input className={`${FIELD} h-[17px] w-10`} />
            </label>
          </div>
        </div>
      </div>
      <VariantBox />
    </div>
  );
}

function CrossoverPane() {
  return (
    <aside className="flex w-[594px] shrink-0 flex-col pb-1 pr-[3px]">
      <MenuBar />
      <TabBar />
      <div className="ml-[3px] flex min-h-0 flex-1 flex-col border border-l-2 border-[#fcfcfc] outline outline-[#e4e4e4]">
        <Toolbar />
        <div className="flex min-h-0 flex-1 pl-[6px]">
          <div className="min-w-0 flex-1"><Schematic /></div>
          <div className="flex w-[15px] flex-col items-center">
            <Chevron d="M3 7L6 4L9 7" />
            <div className="w-3 grow-[88] bg-[#cdcdcd]" />
            <div className="grow-[12]" />
            <Chevron d="M3 4L6 7L9 4" />
          </div>
        </div>
        <div className="flex h-[14px] items-center pl-[6px] pr-[15px]">
          <Chevron d="M7 3L4 6L7 9" />
          <div className="h-3 w-[33%] bg-[#cdcdcd]" />
          <div className="flex-1" />
          <Chevron d="M4 3L7 6L4 9" />
        </div>
        <BottomPanel />
      </div>
    </aside>
  );
}

/* ------------------------------------------------------------------ */
/* Right side                                                          */
/* ------------------------------------------------------------------ */

function ChartToolbar() {
  return (
    <div className="flex h-[26px] items-center pb-[2px] pl-1">
      <label className="flex items-center gap-[2px]">
        Ref angle
        <input defaultValue="0" className={`${FIELD} h-[17px] w-[33px]`} />
      </label>
      <span className="ml-1 mr-[6px]">deg hor</span>
      <CheckBox label="SPL max" />
      <input aria-label="SPL max value" defaultValue="20" className={`${FIELD} ml-1 h-[17px] w-[33px]`} />
      <button type="button" aria-label="Step SPL max" className={`${BUTTON} ml-[3px] h-[17px] w-[17px]`}>
        <svg viewBox="0 0 13 15" className="h-[15px] w-[13px]" fill="#333"><path d="M6.500 1L11.500 6H1.500ZM6.500 14L11.500 9H1.500ZM1.500 7h10v1h-10z" /></svg>
      </button>
      <button type="button" aria-label="Fit SPL range" className={`${BUTTON} ml-[2px] h-[17px] w-[17px]`}>
        <svg viewBox="0 0 13 15" className="h-[15px] w-[13px]" fill="#333"><path d="M1.500 1.500h10v1.500L7 7.500l4.500 4.500v1.500h-10V12L6 7.500L1.500 3z" /></svg>
      </button>
      <span className="ml-[7px] mr-1">Ovl</span>
      <button type="button" aria-label="Add overlay" className={`${BUTTON} h-[18px] w-[21px]`}>
        <svg viewBox="0 0 18 16" className="h-4 w-[18px]"><ellipse cx="9" cy="8" rx="8" ry="7" fill="#28b48c" /><path d="M5 8h8M9 4v8" stroke="white" strokeWidth="2" /></svg>
      </button>
      <button type="button" aria-label="Remove overlay" className={`${BUTTON} ml-1 h-[18px] w-[21px]`}>
        <svg viewBox="0 0 18 16" className="h-4 w-[18px]"><ellipse cx="9" cy="8" rx="8" ry="7" fill="#28b48c" /><path d="M5 8h8" stroke="white" strokeWidth="2" /></svg>
      </button>
      <input aria-label="Project title" defaultValue="Small cardioid 6 x 4 in drivers" className={`${FIELD} ml-1 h-[17px] w-60 px-[2px] text-left`} />
      <input aria-label="Lowest frequency" defaultValue="20" className={`${FIELD} ml-auto h-[17px] w-[29px]`} />
      <span className="mx-[5px]">...</span>
      <input aria-label="Highest frequency" defaultValue="20000" className={`${FIELD} h-[17px] w-[33px]`} />
      <span className="ml-[3px]">Hz</span>
    </div>
  );
}

export default function App() {
  return (
    <div className="flex min-h-screen border-t-2 border-white bg-[#f0f0f0] font-[Roboto,'Liberation_Sans',sans-serif] text-[10px] leading-none text-black">
      <CrossoverPane />
      <main className="min-w-0 flex-1 pl-[6px] pr-[3px]">
        <ChartToolbar />
        <div className="grid grid-cols-2 gap-x-[5px] gap-y-1">
          <LineChart title="SPL" leftUnit="dB" rightUnit="deg" divisions={40} leftLabels={range(20, -20, -5)} rightLabels={range(180, -180, -45)} curves={SPL_CURVES} />
          <LineChart title="GD & Phase" leftUnit="ms" rightUnit="deg" divisions={20} leftLabels={range(15, -5, -5)} rightLabels={range(180, -180, -90)} curves={GD_CURVES} />
          <LineChart title="Power & DI" leftUnit="dB" rightUnit="dB" divisions={40} leftLabels={range(20, -20, -5)} rightLabels={range(35, -5, -5)} curves={POWER_CURVES} />
          <LineChart title="Filter" leftUnit="dB" rightUnit="deg" divisions={50} leftLabels={range(10, -40, -5)} rightLabels={range(180, -180, -36)} curves={FILTER_CURVES} />
          <DirectivityChart title="Directivity (hor)" plane="hor" />
          <DirectivityChart title="Directivity (ver)" plane="ver" />
        </div>
      </main>
    </div>
  );
}
